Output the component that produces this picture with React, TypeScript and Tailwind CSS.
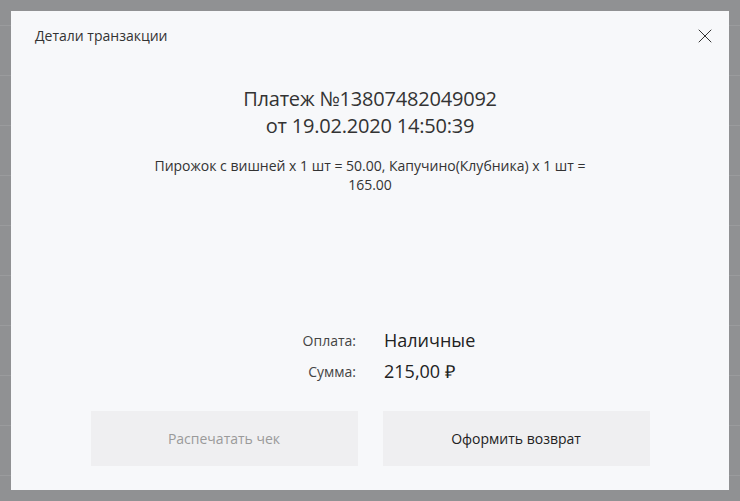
import { X } from "lucide-react";

const rows = Array.from({ length: 10 });

export default function App() {
  return (
    <div className="relative h-[501px] w-[740px] overflow-hidden bg-[#909193] font-['Open_Sans',sans-serif]">
      {/* table rows behind the overlay */}
      <div className="flex flex-col pt-[25px]">
        {rows.map((_, i) => (
          <div key={i} className="h-[50px] border-t border-[#9a9b9d]" />
        ))}
      </div>

      {/* modal */}
      <div className="absolute inset-[11px] flex flex-col bg-[#f7f8fa] px-6 pb-6 pt-[13px] text-[#333]">
        <div className="flex h-6 items-center justify-between">
          <h2 className="text-[14px] leading-5 text-[#333]">Детали транзакции</h2>
          <button className="-mr-[12px] flex h-6 w-6 items-center justify-center text-[#333]">
            <X size={24} strokeWidth={1} />
          </button>
        </div>

        <div className="mt-[37px] text-center text-[20px] leading-[27px] tracking-[-0.2px] text-[#333]">
          <div>Платеж №13807482049092</div>
          <div>от 19.02.2020 14:50:39</div>
        </div>

        <p className="mt-[17px] text-center text-[14px] leading-[19px] text-[#333]">
          Пирожок с вишней x 1 шт = 50.00, Капучино(Клубника) x 1 шт =
          <br />
          165.00
        </p>

        <div className="flex-1" />

        <div className="mx-auto w-[559px]">
          <div className="grid grid-cols-2 gap-x-7">
            <div className="text-right text-[14px] leading-[31px] text-[#444]">Оплата:</div>
            <div className="text-[18px] leading-[31px] text-[#222]">Наличные</div>
            <div className="text-right text-[14px] leading-[31px] text-[#444]">Сумма:</div>
            <div className="text-[18px] leading-[31px] text-[#222]">215,00 ₽</div>
          </div>

          <div className="mt-6 grid grid-cols-2 gap-[25px]">
            <button
              disabled
              className="h-[55px] bg-[#efeff1] text-[14px] text-[#9a9a9a]"
            >
              Распечатать чек
            </button>
            <button className="h-[55px] bg-[#efeff1] text-[14px] text-[#222]">
              Оформить возврат
            </button>
          </div>
        </div>
      </div>
    </div>
  );
}
